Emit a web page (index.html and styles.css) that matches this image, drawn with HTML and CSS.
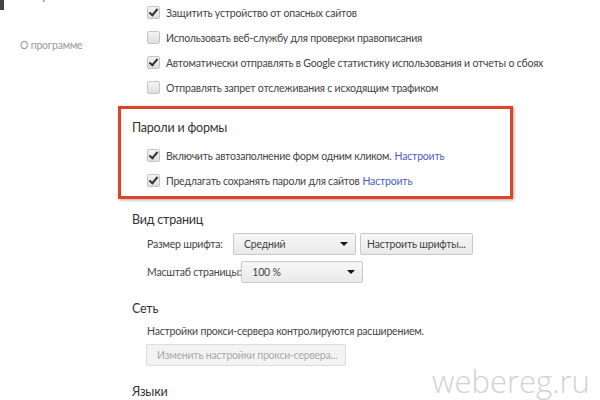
FILE: index.html
```html
<!DOCTYPE html>
<html lang="ru">
<head>
    <meta charset="UTF-8">
    <meta name="viewport" content="width=device-width, initial-scale=1.0">
    <title>Настройки</title>
    <link rel="stylesheet" href="styles.css">
</head>
<body>
    <div class="page">
        <nav class="sidebar">
            <div class="nav-item selected">Настройки</div>
            <div class="nav-item">О программе</div>
        </nav>

        <main class="content">
            <section class="section top">
                <div class="option"><span class="checkbox checked"></span>Защитить устройство от опасных сайтов</div>
                <div class="option"><span class="checkbox"></span>Использовать веб-службу для проверки правописания</div>
                <div class="option"><span class="checkbox checked"></span>Автоматически отправлять в Google статистику использования и отчеты о сбоях</div>
                <div class="option"><span class="checkbox"></span>Отправлять запрет отслеживания с исходящим трафиком</div>
            </section>

            <section class="section highlight">
                <h3>Пароли и формы</h3>
                <div class="option"><span class="checkbox checked"></span>Включить автозаполнение форм одним кликом. <a href="#" class="link">Настроить</a></div>
                <div class="option"><span class="checkbox checked"></span>Предлагать сохранять пароли для сайтов <a href="#" class="link">Настроить</a></div>
            </section>

            <section class="section appearance">
                <h3>Вид страниц</h3>
                <div class="control-row">
                    <span class="label">Размер шрифта:</span>
                    <div class="select font-size">Средний</div>
                    <button class="button">Настроить шрифты...</button>
                </div>
                <div class="control-row">
                    <span class="label">Масштаб страницы:</span>
                    <div class="select zoom">100 %</div>
                </div>
            </section>

            <section class="section network">
                <h3>Сеть</h3>
                <p class="note">Настройки прокси-сервера контролируются расширением.</p>
                <button class="button disabled">Изменить настройки прокси-сервера...</button>
            </section>

            <section class="section languages">
                <h3>Языки</h3>
            </section>
        </main>
    </div>

    <div class="watermark">webereg.ru</div>
</body>
</html>
```

FILE: styles.css
```css
body {
    margin: 0;
    background-color: #fff;
    font-family: 'Lato', 'Open Sans', sans-serif;
    font-size: 10.5px;
    letter-spacing: -0.2px;
    color: #444;
    overflow: hidden;
}
.page {
    display: flex;
    height: 400px;
}
.sidebar {
    width: 118px;
    flex-shrink: 0;
    margin-top: -18px;
}
.nav-item {
    padding-left: 20px;
    height: 28px;
    line-height: 28px;
    color: #999;
    margin-bottom: 21px;
}
.nav-item.selected {
    border-left: 4px solid #444;
    padding-left: 16px;
    color: #666;
}
.content {
    flex: 1;
}
.section {
    padding-left: 14px;
}
.section h3 {
    margin: 0;
    font-size: 12.5px;
    letter-spacing: -0.2px;
    font-weight: normal;
    color: #333;
    line-height: 18px;
}
.option {
    display: flex;
    align-items: center;
    height: 25px;
    padding-left: 15px;
    white-space: nowrap;
}
.checkbox {
    width: 11px;
    height: 11px;
    margin-right: 6px;
    border: 1px solid #c4c4c4;
    border-radius: 2px;
    background: linear-gradient(#f4f4f4, #dedede);
    position: relative;
    flex-shrink: 0;
}
.checkbox.checked::after {
    content: '';
    position: absolute;
    left: 3px;
    top: 0;
    width: 3px;
    height: 7px;
    border-right: 2px solid #333;
    border-bottom: 2px solid #333;
    transform: rotate(40deg);
}
.link {
    color: #4a5ec6;
    text-decoration: none;
    margin-left: 3px;
}
.highlight {
    width: 395px;
    box-sizing: border-box;
    margin-top: 6px;
    padding: 10px 0 3px 11px;
    border: 3px solid #dc4329;
    box-shadow: 1px 1px 3px rgba(0, 0, 0, 0.35);
}
.highlight h3 {
    margin-bottom: 6px;
}
.appearance {
    margin-top: 12px;
}
.network {
    margin-top: 17px;
}
.languages {
    margin-top: 17px;
}
.control-row {
    display: flex;
    align-items: center;
    padding-left: 15px;
    margin-top: 4px;
    margin-bottom: 6px;
}
.label {
    min-width: 86px;
    white-space: nowrap;
}
.select {
    position: relative;
    box-sizing: border-box;
    height: 22px;
    line-height: 20px;
    padding-left: 10px;
    border: 1px solid #c9c9c9;
    border-radius: 2px;
    background: linear-gradient(#f7f7f7, #e9e9e9);
    color: #444;
}
.select::after {
    content: '';
    position: absolute;
    right: 7px;
    top: 8px;
    border-left: 4px solid transparent;
    border-right: 4px solid transparent;
    border-top: 4px solid #111;
}
.select.font-size {
    width: 123px;
}
.select.zoom {
    width: 122px;
}
.button {
    box-sizing: border-box;
    height: 22px;
    padding: 0 6px;
    margin-left: 4px;
    border: 1px solid #c9c9c9;
    border-radius: 2px;
    background: linear-gradient(#f7f7f7, #e9e9e9);
    font-family: inherit;
    font-size: 10.5px;
    letter-spacing: -0.2px;
    color: #444;
    white-space: nowrap;
}
.button.disabled {
    margin-left: 14px;
    margin-top: 5px;
    padding: 0 10px;
    width: 200px;
    text-align: left;
    color: #aaa;
    border-color: #ddd;
    background: #f3f3f3;
}
.note {
    margin: 5px 0 0 15px;
    line-height: 16px;
}
.watermark {
    position: absolute;
    left: 432px;
    top: 360px;
    font-family: 'Open Sans', sans-serif;
    font-weight: 300;
    font-size: 31px;
    letter-spacing: 0;
    color: #d2d2d2;
}
```
